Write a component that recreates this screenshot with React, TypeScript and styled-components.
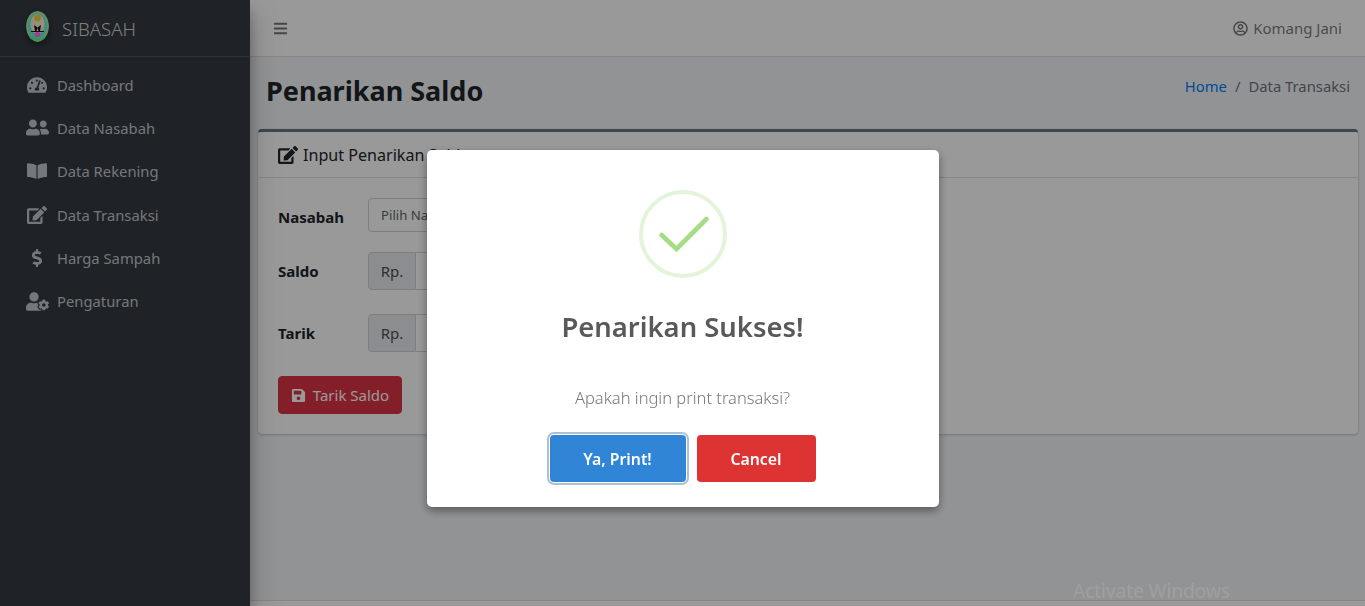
import React from 'react'
import styled, { createGlobalStyle } from 'styled-components'
import {
    FaBars,
    FaBookOpen,
    FaDollarSign,
    FaEdit,
    FaRegUserCircle,
    FaSave,
    FaTachometerAlt,
    FaUserCog,
    FaUserFriends,
} from 'react-icons/fa'

const GlobalStyle = createGlobalStyle`
    * {
        box-sizing: border-box;
    }
    html, body {
        margin: 0;
        height: 606px;
        overflow: hidden;
        font-family: "Noto Sans", "Open Sans", sans-serif;
        font-size: 16px;
        color: #212529;
        background: #f4f6f9;
    }
`

const Wrapper = styled.div`
    display: flex;
    height: 606px;
    overflow: hidden;
`

const Sidebar = styled.aside`
    flex: 0 0 250px;
    background: #343a40;
    box-shadow: 0 14px 28px rgba(0, 0, 0, 0.25), 0 10px 10px rgba(0, 0, 0, 0.22);
    z-index: 1;
`

const Brand = styled.div`
    height: 57px;
    display: flex;
    align-items: center;
    gap: 13px;
    padding: 0 0 0 26px;
    border-bottom: 1px solid #4b545c;
`

const LogoBadge = styled.svg`
    flex: none;
    margin-top: -4px;
    border-radius: 50%;
    box-shadow: 0 3px 6px rgba(0, 0, 0, 0.16), 0 3px 6px rgba(0, 0, 0, 0.23);
`

const BrandName = styled.span`
    font-size: 18.6px;
    font-weight: 300;
    color: rgba(255, 255, 255, 0.8);
`

const Nav = styled.nav`
    display: flex;
    flex-direction: column;
    padding-top: 6px;
`

const NavItem = styled.a`
    height: 43.3px;
    display: flex;
    align-items: center;
    padding-left: 25px;
    font-size: 14.8px;
    color: #c2c7d0;
`

const NavIcon = styled.span`
    width: 24px;
    margin-right: 8px;
    display: flex;
    justify-content: center;
    line-height: 0;
`

const Main = styled.div`
    flex: 1;
    min-width: 0;
    display: flex;
    flex-direction: column;
`

const Navbar = styled.header`
    height: 57px;
    flex: none;
    display: flex;
    align-items: center;
    justify-content: space-between;
    padding: 0 23px;
    background: #fff;
    border-bottom: 1px solid #dee2e6;
    color: rgba(0, 0, 0, 0.55);
`

const UserName = styled.div`
    display: flex;
    align-items: center;
    gap: 5px;
    font-size: 15px;
`

const ContentHeader = styled.div`
    height: 72px;
    flex: none;
    display: flex;
    align-items: center;
    justify-content: space-between;
    padding: 0 15px 6px 16px;
`

const PageTitle = styled.h1`
    margin: 0;
    font-size: 27px;
    font-weight: 700;
    color: #212529;
`

const Breadcrumb = styled.div`
    display: flex;
    gap: 8px;
    font-size: 14.8px;
    color: #6c757d;
    margin-top: -9px;
`

const Crumb = styled.a`
    color: #007bff;
`

const Card = styled.section`
    margin: 0 7px 0 8px;
    height: 305px;
    flex: none;
    background: #fff;
    border-top: 3px solid #6c757d;
    border-radius: 4px;
    box-shadow: 0 0 1px rgba(0, 0, 0, 0.125), 0 1px 3px rgba(0, 0, 0, 0.2);
`

const CardHeader = styled.div`
    height: 46px;
    display: flex;
    align-items: center;
    gap: 5px;
    padding: 0 20px 0;
    font-size: 16.1px;
    border-bottom: 1px solid rgba(0, 0, 0, 0.125);
`

const CardBody = styled.div`
    padding: 20px;
    display: flex;
    flex-direction: column;
    align-items: flex-start;
`

const FormRow = styled.div<{ $gap: number }>`
    display: flex;
    align-items: center;
    margin-bottom: ${(p) => p.$gap}px;
`

const Label = styled.label<{ $shift?: number }>`
    width: 90px;
    padding-top: ${(p) => p.$shift || 0}px;
    font-size: 15px;
    font-weight: 700;
`

const Select = styled.div`
    width: 400px;
    height: 34px;
    display: flex;
    align-items: center;
    padding: 0 12px;
    font-size: 13.2px;
    color: #5f666d;
    background: #fff;
    border: 1px solid #ced4da;
    border-radius: 4px;
`

const InputGroup = styled.div`
    display: flex;
    width: 400px;
    height: 38px;
`

const Addon = styled.span`
    width: 48px;
    display: flex;
    align-items: center;
    justify-content: center;
    font-size: 15px;
    color: #495057;
    background: #e9ecef;
    border: 1px solid #ced4da;
    border-radius: 4px 0 0 4px;
`

const Field = styled.div`
    flex: 1;
    background: #fff;
    border: 1px solid #ced4da;
    border-left: 0;
    border-radius: 0 4px 4px 0;
`

const SaveButton = styled.button`
    width: 124px;
    height: 38px;
    display: flex;
    align-items: center;
    justify-content: center;
    gap: 7px;
    padding: 0;
    font-family: inherit;
    font-size: 15px;
    color: #fff;
    background: #dc3545;
    border: 1px solid #dc3545;
    border-radius: 4px;
`

const Footer = styled.footer`
    margin-top: auto;
    height: 6px;
    flex: none;
    background: #fff;
    border-top: 1px solid #dee2e6;
`

const Overlay = styled.div`
    position: fixed;
    inset: 0;
    z-index: 10;
    display: flex;
    align-items: flex-start;
    justify-content: center;
    padding-top: 150px;
    background: rgba(0, 0, 0, 0.4);
`

const Modal = styled.div`
    width: 512px;
    height: 357px;
    display: flex;
    flex-direction: column;
    align-items: center;
    padding-top: 40px;
    background: #fff;
    border-radius: 5px;
    box-shadow: 0 4px 10px rgba(0, 0, 0, 0.4);
`

const SuccessIcon = styled.svg`
    width: 88px;
    height: 88px;
    flex: none;
`

const ModalTitle = styled.h2`
    margin: 28px 0 0;
    height: 42px;
    line-height: 42px;
    font-size: 27.4px;
    font-weight: 600;
    color: #595959;
`

const ModalText = styled.p`
    margin: 38px 0 0;
    height: 24px;
    line-height: 24px;
    font-size: 16.5px;
    font-weight: 300;
    color: #777;
`

const Actions = styled.div`
    display: flex;
    gap: 11px;
    margin-top: 25px;
`

const ModalButton = styled.button<{ $color: string; $width: number; $focused?: boolean }>`
    width: ${(p) => p.$width}px;
    height: 47px;
    padding: 0;
    font-family: inherit;
    font-size: 15.8px;
    font-weight: 600;
    color: #fff;
    background: ${(p) => p.$color};
    border: 0;
    border-radius: 4px;
    box-shadow: ${(p) =>
        p.$focused ? '0 0 0 1px #fff, 0 0 0 3px rgba(50, 100, 150, 0.4)' : 'none'};
`

const Watermark = styled.div`
    position: fixed;
    left: 1073px;
    top: 578px;
    z-index: 20;
    font-size: 19px;
    color: rgba(255, 255, 255, 0.1);
`

const menu = [
    { label: 'Dashboard', icon: <FaTachometerAlt size={20} /> },
    { label: 'Data Nasabah', icon: <FaUserFriends size={23} /> },
    { label: 'Data Rekening', icon: <FaBookOpen size={20} /> },
    { label: 'Data Transaksi', icon: <FaEdit size={20} /> },
    { label: 'Harga Sampah', icon: <FaDollarSign size={18} /> },
    { label: 'Pengaturan', icon: <FaUserCog size={23} /> },
]

// crest of the village bank, drawn small: only the colour bands read at this size
const Logo = () => (
    <LogoBadge width="23" height="31" viewBox="0 0 23 31">
        <path d="M11.5 0C18 0 23 6 23 15C23 24 18 30 11.5 31C5 30 0 24 0 15C0 6 5 0 11.5 0Z" fill="#9df09a" />
        <ellipse cx="11.5" cy="15" rx="9.5" ry="13" fill="#70e6e6" />
        <ellipse cx="11.5" cy="13" rx="7" ry="10" fill="#f5f0d0" />
        <circle cx="11.5" cy="7" r="3.4" fill="#f5d040" />
        <path d="M8 14L9 20H10.5L11.5 17L12.5 20H14L15 14L11.5 16.5Z" fill="#111" />
        <path d="M5 20.5H18" stroke="#111" strokeWidth="1" />
        <circle cx="11.5" cy="23.5" r="2.8" fill="#ff70e0" />
        <path d="M4 26.5C8 29 15 29 19 26.5" stroke="#50ff80" strokeWidth="2.4" fill="none" />
    </LogoBadge>
)

export default function App() {
    return (
        <>
            <GlobalStyle />
            <Wrapper>
                <Sidebar>
                    <Brand>
                        <Logo />
                        <BrandName>SIBASAH</BrandName>
                    </Brand>
                    <Nav>
                        {menu.map((item) => (
                            <NavItem key={item.label}>
                                <NavIcon>{item.icon}</NavIcon>
                                {item.label}
                            </NavItem>
                        ))}
                    </Nav>
                </Sidebar>
                <Main>
                    <Navbar>
                        <FaBars size={15} />
                        <UserName>
                            <FaRegUserCircle size={15} />
                            Komang Jani
                        </UserName>
                    </Navbar>
                    <ContentHeader>
                        <PageTitle>Penarikan Saldo</PageTitle>
                        <Breadcrumb>
                            <Crumb>Home</Crumb>
                            <span>/</span>
                            <span>Data Transaksi</span>
                        </Breadcrumb>
                    </ContentHeader>
                    <Card>
                        <CardHeader>
                            <FaEdit size={20} />
                            Input Penarikan Saldo
                        </CardHeader>
                        <CardBody>
                            <FormRow $gap={20}>
                                <Label $shift={3}>Nasabah</Label>
                                <Select>Pilih Nasabah</Select>
                            </FormRow>
                            <FormRow $gap={24}>
                                <Label>Saldo</Label>
                                <InputGroup>
                                    <Addon>Rp.</Addon>
                                    <Field />
                                </InputGroup>
                            </FormRow>
                            <FormRow $gap={24}>
                                <Label>Tarik</Label>
                                <InputGroup>
                                    <Addon>Rp.</Addon>
                                    <Field />
                                </InputGroup>
                            </FormRow>
                            <SaveButton>
                                <FaSave size={15} />
                                Tarik Saldo
                            </SaveButton>
                        </CardBody>
                    </Card>
                    <Footer />
                </Main>
            </Wrapper>
            <Overlay>
                <Modal>
                    <SuccessIcon viewBox="0 0 88 88">
                        <circle cx="44" cy="44" r="42" fill="none" stroke="rgba(165, 220, 134, 0.3)" strokeWidth="4" />
                        <path d="M22.5 45L37.5 59L67.5 29" fill="none" stroke="#a5dc86" strokeWidth="4.6" strokeLinecap="round" strokeLinejoin="miter" />
                    </SuccessIcon>
                    <ModalTitle>Penarikan Sukses!</ModalTitle>
                    <ModalText>Apakah ingin print transaksi?</ModalText>
                    <Actions>
                        <ModalButton $color="#3085d6" $width={136} $focused>
                            Ya, Print!
                        </ModalButton>
                        <ModalButton $color="#dd3333" $width={119}>
                            Cancel
                        </ModalButton>
                    </Actions>
                </Modal>
            </Overlay>
            <Watermark>Activate Windows</Watermark>
        </>
    )
}
